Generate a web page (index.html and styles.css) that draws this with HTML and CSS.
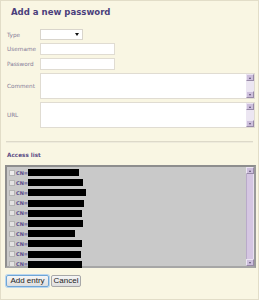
FILE: index.html
```html
<!DOCTYPE html>
<html>
<head>
<meta charset="utf-8">
<link rel="stylesheet" href="styles.css">
</head>
<body>
<div class="panel">
  <h1 class="title">Add a new password</h1>
  <div class="form">
    <label class="lbl">Type</label>
    <div class="select"><span class="caret"></span></div>
    <label class="lbl">Username</label>
    <div class="input"></div>
    <label class="lbl">Password</label>
    <div class="input"></div>
    <label class="lbl">Comment</label>
    <div class="textarea"><div class="vscroll"><span class="sbtn"><span class="tri up"></span></span><span class="sbtn"><span class="tri down"></span></span></div></div>
    <label class="lbl">URL</label>
    <div class="textarea"><div class="vscroll"><span class="sbtn"><span class="tri up"></span></span><span class="sbtn"><span class="tri down"></span></span></div></div>
  </div>
  <div class="rule"></div>
  <div class="section">Access list</div>
  <div class="list">
    <div class="rows">
      <div class="row"><span class="cb checked"></span><span class="cn">CN=</span><span class="redact" style="width:51px"></span></div>
      <div class="row"><span class="cb"></span><span class="cn">CN=</span><span class="redact" style="width:55px"></span></div>
      <div class="row"><span class="cb"></span><span class="cn">CN=</span><span class="redact" style="width:58px"></span></div>
      <div class="row"><span class="cb"></span><span class="cn">CN=</span><span class="redact" style="width:56px"></span></div>
      <div class="row"><span class="cb"></span><span class="cn">CN=</span><span class="redact" style="width:54px"></span></div>
      <div class="row"><span class="cb"></span><span class="cn">CN=</span><span class="redact" style="width:55px"></span></div>
      <div class="row"><span class="cb"></span><span class="cn">CN=</span><span class="redact" style="width:47px"></span></div>
      <div class="row"><span class="cb"></span><span class="cn">CN=</span><span class="redact" style="width:54px"></span></div>
      <div class="row"><span class="cb"></span><span class="cn">CN=</span><span class="redact" style="width:53px"></span></div>
      <div class="row"><span class="cb"></span><span class="cn">CN=</span><span class="redact" style="width:54px"></span></div>
    </div>
    <div class="lscroll">
      <span class="lbtn"><span class="tri up"></span></span>
      <span class="thumb"></span>
      <span class="lbtn"><span class="tri down"></span></span>
    </div>
  </div>
  <div class="actions">
    <button class="btn primary">Add entry</button>
    <button class="btn">Cancel</button>
  </div>
</div>
</body>
</html>
```

FILE: styles.css
```css
* { box-sizing: border-box; }
html, body { margin: 0; padding: 0; background: #ffffff; }

.panel {
  width: 259px;
  height: 300px;
  border: 1px solid #e2ddc8;
  background: #f9f6e3;
  padding: 5px 2px 0 4px;
  font-family: "DejaVu Sans", Verdana, sans-serif;
}

.title {
  margin: 0 0 0 6px;
  font-family: "DejaVu Sans Condensed", "DejaVu Sans", sans-serif;
  font-stretch: condensed;
  font-weight: bold;
  font-size: 9.5px;
  line-height: 12px;
  color: #4b3f7c;
}

.form {
  display: grid;
  grid-template-columns: 33px 215px;
  row-gap: 3px;
  margin: 11px 0 0 2px;
  align-items: center;
}

.lbl {
  font-size: 5.7px;
  color: #857b98;
}

.select {
  width: 43px;
  height: 11px;
  background: #fff;
  border: 1px solid #d9d5cc;
  display: flex;
  align-items: center;
  justify-content: flex-end;
  padding-right: 3px;
}

.caret {
  width: 0;
  height: 0;
  border-left: 2.5px solid transparent;
  border-right: 2.5px solid transparent;
  border-top: 3px solid #111;
}

.input {
  width: 75px;
  height: 12px;
  background: #fff;
  border: 1px solid #e0dcd2;
}

.textarea {
  height: 26px;
  background: #fff;
  border: 1px solid #e0dcd2;
  display: flex;
  justify-content: flex-end;
}

.vscroll {
  width: 8px;
  display: flex;
  flex-direction: column;
  justify-content: space-between;
  background: #ece6f2;
}

.sbtn, .lbtn {
  height: 7px;
  background: #cdbfdc;
  border: 1px solid;
  border-color: #ebe4f2 #988aa8 #988aa8 #ebe4f2;
  display: flex;
  align-items: center;
  justify-content: center;
}

.tri {
  width: 0;
  height: 0;
  border-left: 1.5px solid transparent;
  border-right: 1.5px solid transparent;
}
.tri.up { border-bottom: 2px solid #5a4c70; }
.tri.down { border-top: 2px solid #5a4c70; }

.rule {
  margin: 13px 3px 0 1px;
  height: 2px;
  border-top: 1px solid #ddd9c9;
  border-bottom: 1px solid #eeebdc;
}

.section {
  margin: 8px 0 0 2px;
  font-size: 5.7px;
  font-weight: bold;
  color: #5b4d85;
  line-height: 8px;
}

.list {
  margin-top: 6px;
  height: 103px;
  display: flex;
  background: #c9c9c9;
  border: 2px solid;
  border-color: #8e8e8e #9a9a9a #a6a6a6 #8e8e8e;
}

.rows {
  flex: 1;
  padding-top: 0.5px;
}

.row {
  height: 10.2px;
  display: flex;
  align-items: center;
}

.cb {
  width: 6px;
  height: 6px;
  margin-left: 2px;
  border: 1px solid #b4b4b4;
  background: #e2e2e2;
}
.cb.checked { background: #ececec; }

.cn {
  margin-left: 1px;
  width: 12px;
  font-size: 5px;
  font-weight: bold;
  color: #5b4d8c;
}

.redact {
  height: 7px;
  background: #000;
}

.lscroll {
  width: 8px;
  display: flex;
  flex-direction: column;
  background: #e8e0f0;
}

.thumb {
  flex: 1;
  background: #d5c6e2;
  border-left: 1px solid #b9aac9;
  border-right: 1px solid #e8e0f0;
}

.actions {
  display: flex;
  gap: 2px;
  margin: 7px 0 0 1px;
}

.btn {
  height: 12px;
  padding: 0;
  white-space: nowrap;
  font-family: "Liberation Sans", Arial, sans-serif;
  font-size: 8px;
  line-height: 10px;
  color: #222;
  background: linear-gradient(#f6f6f6, #dedede);
  border: 1px solid #a8a8a8;
  border-radius: 2px;
}
.btn.primary {
  width: 43px;
  border-color: #6fa6d6;
  box-shadow: 0 0 0 1px #b9d6ef;
}
.btn:not(.primary) { width: 30px; }
```
